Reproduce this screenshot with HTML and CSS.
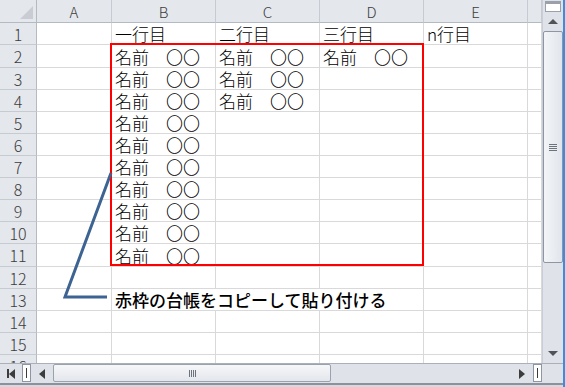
FILE: index.html
```html
<!DOCTYPE html>
<html lang="ja">
<head>
  <meta charset="UTF-8">
  <title>台帳</title>
  <link rel="stylesheet" href="styles.css">
</head>
<body>
  <div class="app">
    <div class="main">
      <div class="top">
        <!-- sheet grid -->
        <div class="grid">
          <div class="corner"><span class="tri"></span></div>
          <div class="ch">A</div><div class="ch">B</div><div class="ch">C</div><div class="ch">D</div><div class="ch">E</div><div class="ch"></div>

          <div class="rh">1</div><div class="c"></div><div class="c">一行目</div><div class="c">二行目</div><div class="c">三行目</div><div class="c">n行目</div><div class="c"></div>
          <div class="rh">2</div><div class="c"></div><div class="c">名前　〇〇</div><div class="c">名前　〇〇</div><div class="c">名前　〇〇</div><div class="c"></div><div class="c"></div>
          <div class="rh">3</div><div class="c"></div><div class="c">名前　〇〇</div><div class="c">名前　〇〇</div><div class="c"></div><div class="c"></div><div class="c"></div>
          <div class="rh">4</div><div class="c"></div><div class="c">名前　〇〇</div><div class="c">名前　〇〇</div><div class="c"></div><div class="c"></div><div class="c"></div>
          <div class="rh">5</div><div class="c"></div><div class="c">名前　〇〇</div><div class="c"></div><div class="c"></div><div class="c"></div><div class="c"></div>
          <div class="rh">6</div><div class="c"></div><div class="c">名前　〇〇</div><div class="c"></div><div class="c"></div><div class="c"></div><div class="c"></div>
          <div class="rh">7</div><div class="c"></div><div class="c">名前　〇〇</div><div class="c"></div><div class="c"></div><div class="c"></div><div class="c"></div>
          <div class="rh">8</div><div class="c"></div><div class="c">名前　〇〇</div><div class="c"></div><div class="c"></div><div class="c"></div><div class="c"></div>
          <div class="rh">9</div><div class="c"></div><div class="c">名前　〇〇</div><div class="c"></div><div class="c"></div><div class="c"></div><div class="c"></div>
          <div class="rh">10</div><div class="c"></div><div class="c">名前　〇〇</div><div class="c"></div><div class="c"></div><div class="c"></div><div class="c"></div>
          <div class="rh">11</div><div class="c"></div><div class="c">名前　〇〇</div><div class="c"></div><div class="c"></div><div class="c"></div><div class="c"></div>
          <div class="rh">12</div><div class="c"></div><div class="c"></div><div class="c"></div><div class="c"></div><div class="c"></div><div class="c"></div>
          <div class="rh">13</div><div class="c"></div><div class="c note"><span>赤枠の台帳をコピーして貼り付ける</span></div><div class="c"></div><div class="c"></div><div class="c"></div><div class="c"></div>
          <div class="rh">14</div><div class="c"></div><div class="c"></div><div class="c"></div><div class="c"></div><div class="c"></div><div class="c"></div>
          <div class="rh">15</div><div class="c"></div><div class="c"></div><div class="c"></div><div class="c"></div><div class="c"></div><div class="c"></div>
          <div class="rh">16</div><div class="c"></div><div class="c"></div><div class="c"></div><div class="c"></div><div class="c"></div><div class="c"></div>

          <!-- red frame around the ledger and the callout line -->
          <div class="frame"></div>
          <svg class="callout" width="120" height="310" viewBox="0 0 120 310">
            <polyline points="111,173 65,297 107,297" fill="none" stroke="#3d6393" stroke-width="3"/>
          </svg>
        </div>

        <!-- vertical scroll bar -->
        <div class="vbar">
          <div class="split"></div>
          <div class="vbtn"><span class="up"></span></div>
          <div class="vtrack">
            <div class="vthumb"><span class="grip-h"></span></div>
          </div>
          <div class="vbtn"><span class="down"></span></div>
        </div>
      </div>

      <!-- sheet tabs nav + horizontal scroll bar -->
      <div class="hbar">
        <div class="nav"><span class="bar"></span><span class="left"></span></div>
        <div class="tabsplit"></div>
        <div class="nav"><span class="left"></span></div>
        <div class="htrack">
          <div class="hthumb"><span class="grip-v"></span></div>
        </div>
        <div class="nav"><span class="right"></span></div>
        <div class="tabsplit"></div>
        <div class="hrest"></div>
      </div>
      <div class="status"></div>
    </div>
    <div class="edge"></div>
  </div>
</body>
</html>
```

FILE: styles.css
```css
* {
  box-sizing: border-box;
}
body {
  margin: 0;
  width: 565px;
  height: 387px;
  overflow: hidden;
  background-color: #fff;
  font-family: "Noto Sans CJK JP", "Noto Sans", sans-serif;
}
.app {
  display: flex;
  height: 387px;
}
.main {
  width: 563px;
  display: flex;
  flex-direction: column;
}
.edge {
  width: 2px;
  background-color: #3b8de0;
}
.top {
  display: flex;
  height: 363px;
}

/* grid */
.grid {
  position: relative;
  width: 542px;
  height: 363px;
  overflow: hidden;
  display: grid;
  grid-template-columns: 37px 75px 104px 104px 104px 104px 14px;
  grid-template-rows: 23px 22px 23px 22px 22px 22px 22px 22px 22px 22px 22px 23px 22px 22px 22px 22px 22px;
}
.corner, .ch, .rh {
  background-color: #e4e7ec;
  color: #3c3c3c;
  border-right: 1px solid #b4bac3;
  border-bottom: 1px solid #b4bac3;
  font-size: 15px;
  font-weight: 300;
  display: flex;
  align-items: center;
  justify-content: center;
}
.ch {
  border-right-color: #c6cbd2;
}
.rh {
  border-bottom-color: #c6cbd2;
  font-size: 16px;
}
.corner {
  position: relative;
}
.tri {
  position: absolute;
  right: 3px;
  bottom: 3px;
  width: 0;
  height: 0;
  border-left: 13px solid transparent;
  border-bottom: 13px solid #c9cdd3;
}
.c {
  border-right: 1px solid #d9d9d9;
  border-bottom: 1px solid #d9d9d9;
  font-size: 17px;
  font-weight: 300;
  color: #000;
  padding-left: 3px;
  white-space: nowrap;
  display: flex;
  align-items: flex-end;
  line-height: 21px;
}
.note {
  overflow: visible;
  position: relative;
  z-index: 1;
}
.note span {
  font-size: 17px;
  font-weight: 500;
  background-color: #fff;
}

.frame {
  position: absolute;
  left: 110px;
  top: 43px;
  width: 314px;
  height: 223px;
  border: 2px solid #ff0000;
}
.callout {
  position: absolute;
  left: 0;
  top: 0;
}

/* vertical scroll bar */
.vbar {
  width: 21px;
  background-color: #dfe3e9;
  border-left: 1px solid #c9ced6;
  display: flex;
  flex-direction: column;
}
.split {
  height: 11px;
  margin: 1px 2px 0 2px;
  background-color: #fff;
  border: 1px solid #9aa1ab;
  border-top: 3px solid #9aa1ab;
}
.vbtn {
  height: 19px;
  display: flex;
  align-items: center;
  justify-content: center;
}
.up, .down {
  width: 0;
  height: 0;
  border-left: 5px solid transparent;
  border-right: 5px solid transparent;
}
.up {
  border-bottom: 5px solid #505459;
}
.down {
  border-top: 5px solid #505459;
}
.vtrack {
  flex: 1;
  padding: 0 0 80px 0;
}
.vthumb {
  height: 232px;
  border: 1px solid #8d96a2;
  border-radius: 2px;
  background: linear-gradient(to right, #f3f5f8, #e1e5eb);
  display: flex;
  align-items: center;
  justify-content: center;
}
.grip-h {
  width: 8px;
  height: 7px;
  background: repeating-linear-gradient(to bottom, #6d737c 0, #6d737c 1px, transparent 1px, transparent 2px);
}

/* horizontal bar */
.hbar {
  height: 20px;
  display: flex;
  background-color: #dfe3e9;
  border-top: 1px solid #a9b0ba;
}
.nav {
  width: 22px;
  display: flex;
  align-items: center;
  justify-content: center;
}
.nav .bar {
  width: 2px;
  height: 9px;
  background-color: #3c3c3c;
}
.left, .right {
  width: 0;
  height: 0;
  border-top: 5px solid transparent;
  border-bottom: 5px solid transparent;
}
.left {
  border-right: 6px solid #3c3c3c;
}
.right {
  border-left: 6px solid #3c3c3c;
}
.tabsplit {
  width: 9px;
  margin-bottom: 1px;
  background-color: #fff;
  border: 1px solid #8d96a2;
  display: flex;
  justify-content: center;
}
.tabsplit::after {
  content: "";
  width: 1px;
  margin: 3px 0;
  background-color: #3c3c3c;
}
.htrack {
  flex: 1;
  padding: 0 180px 1px 0;
}
.hthumb {
  height: 18px;
  border: 1px solid #9aa2ad;
  border-radius: 2px;
  background: linear-gradient(to bottom, #f6f7f9, #e3e6eb);
  display: flex;
  align-items: center;
  justify-content: center;
}
.grip-v {
  width: 7px;
  height: 7px;
  background: repeating-linear-gradient(to right, #6d737c 0, #6d737c 1px, transparent 1px, transparent 2px);
}
.hrest {
  width: 21px;
}
.status {
  height: 4px;
  background-color: #d6dae0;
  border-top: 2px solid #8b929c;
}
```
